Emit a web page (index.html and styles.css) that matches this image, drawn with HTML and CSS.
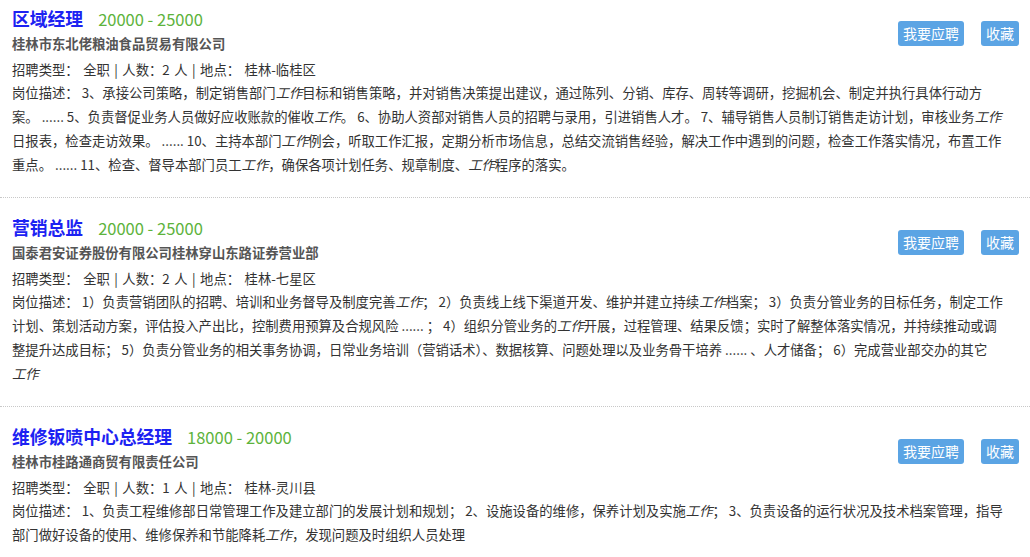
FILE: index.html
```html
<!DOCTYPE html>
<html lang="zh-CN">
<head>
<meta charset="utf-8">
<title>职位列表</title>
<link rel="stylesheet" href="styles.css">
</head>
<body>
<div class="job-list">
  <div class="job">
    <div class="job-top">
      <div class="job-main">
        <div class="job-title"><a class="name">区域经理</a><span class="salary">20000 - 25000</span></div>
        <div class="company">桂林市东北佬粮油食品贸易有限公司</div>
        <div class="info">招聘类型： 全职 | 人数：2 人 | 地点： 桂林-临桂区</div>
      </div>
      <div class="actions"><a class="btn">我要应聘</a><a class="btn">收藏</a></div>
    </div>
    <p class="desc">岗位描述： 3、承接公司策略，制定销售部门<em>工作</em>目标和销售策略，并对销售决策提出建议，通过陈列、分销、库存、周转等调研，挖掘机会、制定并执行具体行动方<br>案。 ...... 5、负责督促业务人员做好应收账款的催收<em>工作</em>。 6、协助人资部对销售人员的招聘与录用，引进销售人才。 7、辅导销售人员制订销售走访计划，审核业务<em>工作</em><br>日报表，检查走访效果。 ...... 10、主持本部门<em>工作</em>例会，听取工作汇报，定期分析市场信息，总结交流销售经验，解决工作中遇到的问题，检查工作落实情况，布置工作<br>重点。 ...... 11、检查、督导本部门员工<em>工作</em>，确保各项计划任务、规章制度、<em>工作</em>程序的落实。</p>
  </div>
  <div class="job">
    <div class="job-top">
      <div class="job-main">
        <div class="job-title"><a class="name">营销总监</a><span class="salary">20000 - 25000</span></div>
        <div class="company">国泰君安证券股份有限公司桂林穿山东路证券营业部</div>
        <div class="info">招聘类型： 全职 | 人数：2 人 | 地点： 桂林-七星区</div>
      </div>
      <div class="actions"><a class="btn">我要应聘</a><a class="btn">收藏</a></div>
    </div>
    <p class="desc">岗位描述： 1）负责营销团队的招聘、培训和业务督导及制度完善<em>工作</em>； 2）负责线上线下渠道开发、维护并建立持续<em>工作</em>档案； 3）负责分管业务的目标任务，制定工作<br>计划、策划活动方案，评估投入产出比，控制费用预算及合规风险 ...... ； 4）组织分管业务的<em>工作</em>开展，过程管理、结果反馈；实时了解整体落实情况，并持续推动或调<br>整提升达成目标； 5）负责分管业务的相关事务协调，日常业务培训（营销话术）、数据核算、问题处理以及业务骨干培养 ...... 、人才储备； 6）完成营业部交办的其它<br><em>工作</em></p>
  </div>
  <div class="job">
    <div class="job-top">
      <div class="job-main">
        <div class="job-title"><a class="name">维修钣喷中心总经理</a><span class="salary">18000 - 20000</span></div>
        <div class="company">桂林市桂路通商贸有限责任公司</div>
        <div class="info">招聘类型： 全职 | 人数：1 人 | 地点： 桂林-灵川县</div>
      </div>
      <div class="actions"><a class="btn">我要应聘</a><a class="btn">收藏</a></div>
    </div>
    <p class="desc">岗位描述： 1、负责工程维修部日常管理工作及建立部门的发展计划和规划； 2、设施设备的维修，保养计划及实施<em>工作</em>； 3、负责设备的运行状况及技术档案管理，指导<br>部门做好设备的使用、维修保养和节能降耗<em>工作</em>，发现问题及时组织人员处理</p>
  </div>
</div>
</body>
</html>
```

FILE: styles.css
```css
* { box-sizing: border-box; }
html, body {
  margin: 0;
  padding: 0;
  background: #fff;
}
body {
  font-family: "Noto Sans CJK SC", "Noto Sans", sans-serif;
  font-size: 13.33px;
  color: #333;
}
.job-list {
  display: flex;
  flex-direction: column;
}
.job {
  padding: 16px 11px 20px 12px;
  border-bottom: 1px dotted #c8c8c8;
}
.job:first-child {
  padding-top: 5px;
}
.job-top {
  display: flex;
  align-items: flex-start;
}
.job-main {
  flex: 1;
  display: flex;
  flex-direction: column;
}
.job-title {
  display: flex;
  align-items: baseline;
  line-height: 26px;
  height: 26px;
}
.name {
  font-size: 17.8px;
  font-weight: bold;
  color: #1c22f2;
  text-decoration: none;
}
.salary {
  margin-left: 15px;
  font-size: 16.5px;
  color: #5db33c;
}
.company {
  line-height: 26px;
  font-weight: bold;
  color: #555;
}
.info {
  margin-top: 2px;
  line-height: 22px;
  color: #333;
  word-spacing: 1.5px;
}
.actions {
  display: flex;
  gap: 17px;
  margin-top: 16px;
}
.btn {
  display: block;
  height: 25px;
  line-height: 25px;
  padding: 0 5px;
  font-size: 14px;
  color: #fff;
  background: #5ba4e4;
  border-radius: 3px;
  cursor: pointer;
}
.desc {
  margin: 0;
  line-height: 24px;
  color: #333;
}
.desc em {
  font-style: italic;
}
```
